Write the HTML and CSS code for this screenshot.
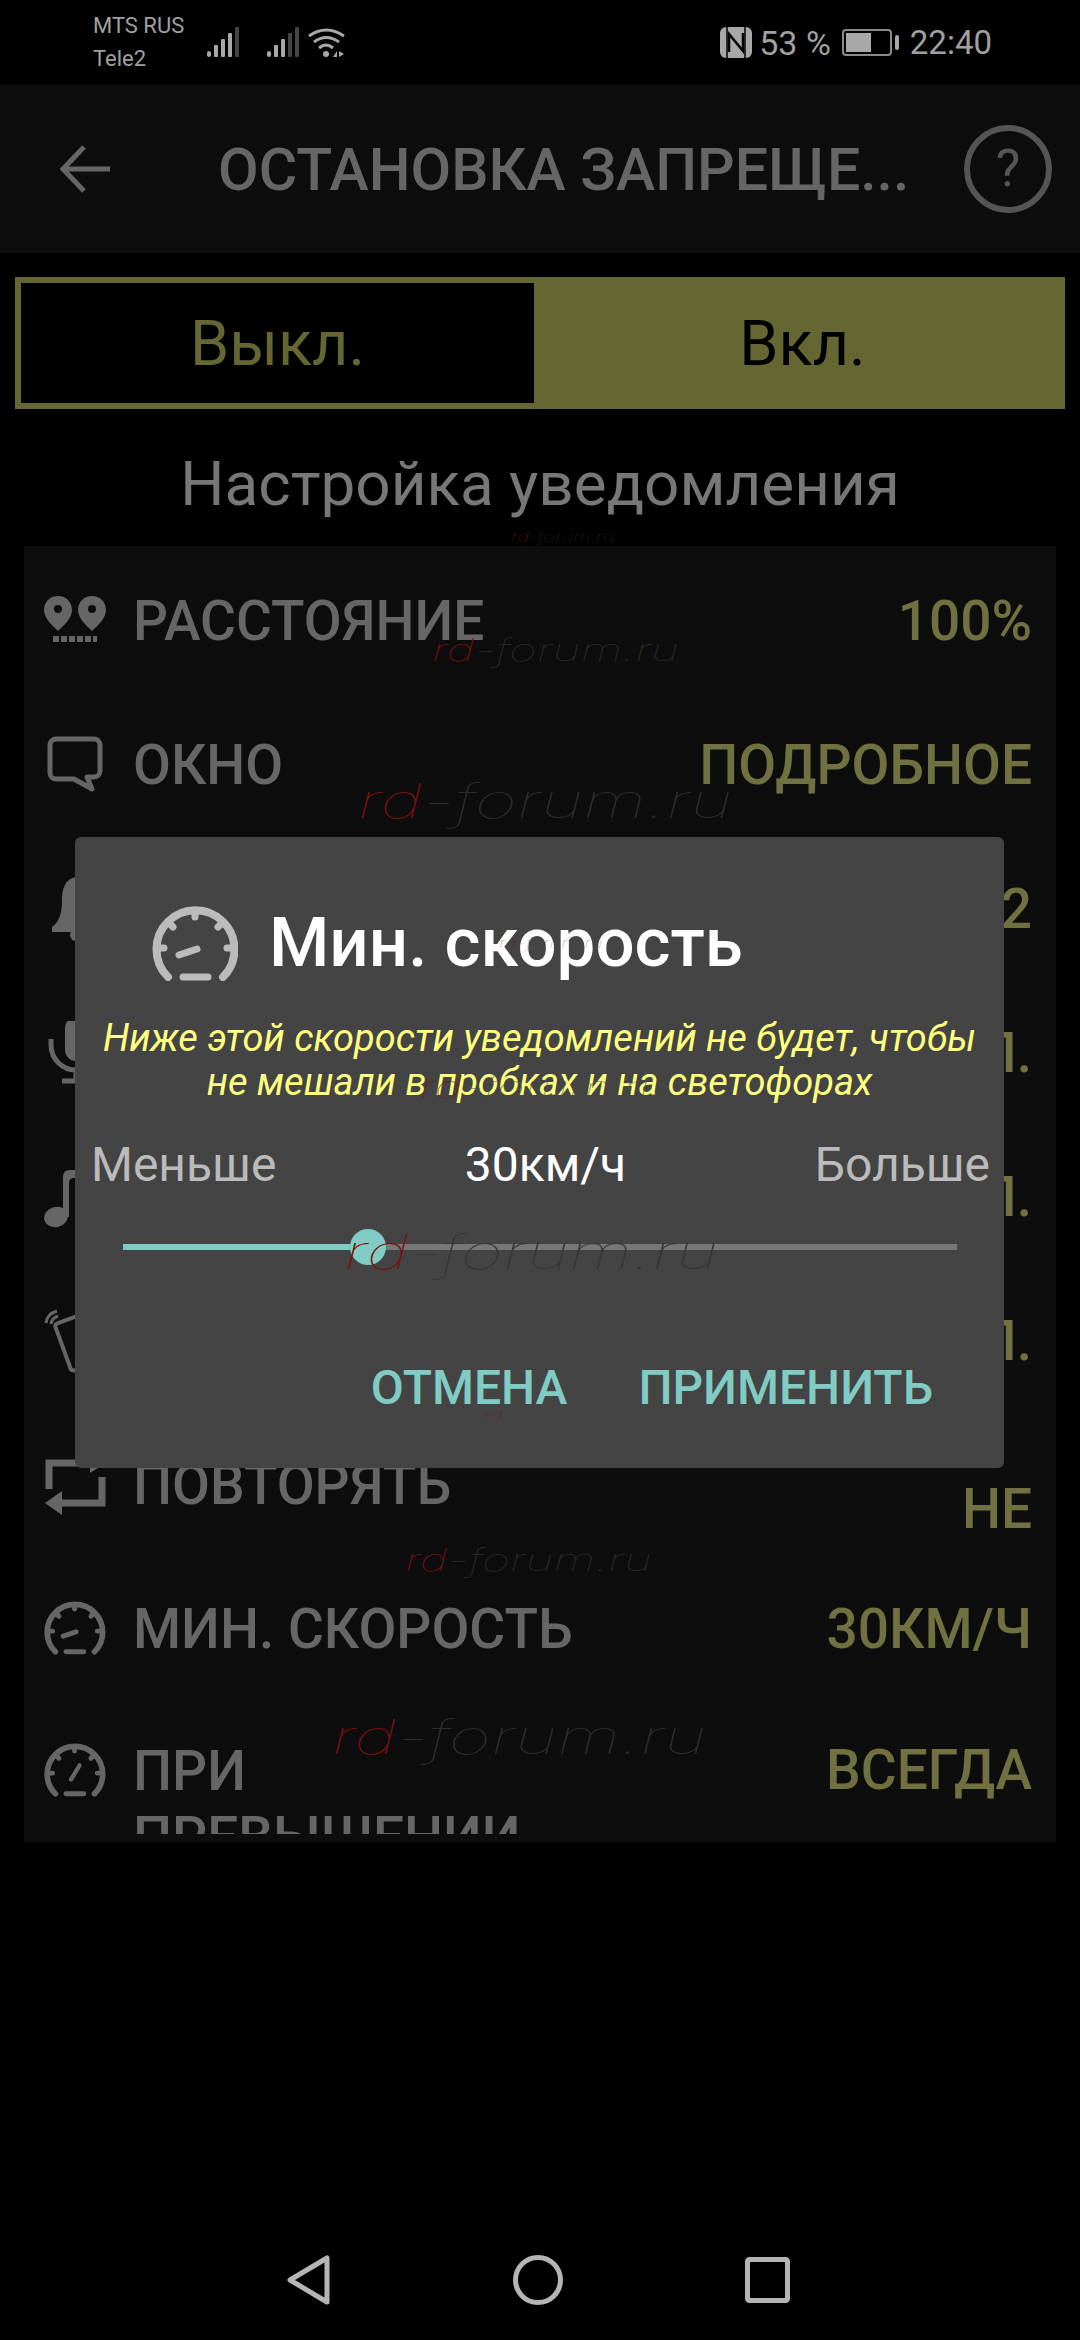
FILE: index.html
```html
<!DOCTYPE html>
<html lang="en">
<head>
  <meta charset="UTF-8">
  <meta name="viewport" content="width=device-width, initial-scale=1.0">
  <title>Мин. скорость</title>
  <link rel="stylesheet" href="styles.css">
</head>
<body>
  <!-- Status bar -->
  <div class="status-bar">
    <div class="carriers">
      <span>MTS RUS</span>
      <span>Tele2</span>
    </div>
    <svg class="signal" width="32" height="30" viewBox="0 0 32 30">
      <rect x="0" y="24" width="4" height="6" rx="2" fill="#a8a8a8"/>
      <rect x="7" y="18" width="4" height="12" rx="1" fill="#a8a8a8"/>
      <rect x="14" y="12" width="4" height="18" rx="1" fill="#a8a8a8"/>
      <rect x="21" y="6" width="4" height="24" rx="1" fill="#a8a8a8"/>
      <rect x="28" y="0" width="4" height="30" rx="1" fill="#444"/>
    </svg>
    <svg class="signal signal-2" width="32" height="30" viewBox="0 0 32 30">
      <rect x="0" y="24" width="4" height="6" rx="2" fill="#a8a8a8"/>
      <rect x="7" y="18" width="4" height="12" rx="1" fill="#a8a8a8"/>
      <rect x="14" y="12" width="4" height="18" rx="1" fill="#a8a8a8"/>
      <rect x="21" y="6" width="4" height="24" rx="1" fill="#444"/>
      <rect x="28" y="0" width="4" height="30" rx="1" fill="#444"/>
    </svg>
    <svg class="wifi" width="38" height="30" viewBox="0 0 38 30" fill="none" stroke="#a8a8a8" stroke-width="3">
      <path d="M1 9 Q18 -3 36 9"/>
      <path d="M6 15 Q18 6 31 15"/>
      <path d="M11 21 Q18 15 25 21"/>
      <circle cx="18" cy="27" r="3" fill="#a8a8a8" stroke="none"/>
      <path d="M25 30 L29 24 V30 Z M31 24 V30 L36 27 Z" fill="#a8a8a8" stroke="none"/>
    </svg>
    <div class="status-right">
      <svg class="nfc" width="32" height="31" viewBox="0 0 32 31">
        <rect width="32" height="31" rx="6" fill="#a8a8a8"/>
        <path d="M7 0 V31 M25 0 V31" stroke="#000" stroke-width="1.5"/>
        <path d="M9 25 V7 L23 24 V6" fill="none" stroke="#000" stroke-width="2.5"/>
      </svg>
      <span class="battery-pct">53 %</span>
      <div class="battery">
        <div class="battery-body"><div class="battery-fill"></div></div>
        <div class="battery-tip"></div>
      </div>
      <span class="clock">22:40</span>
    </div>
  </div>

  <!-- Toolbar -->
  <div class="toolbar">
    <svg class="back" width="50" height="48" viewBox="0 0 50 48" fill="none" stroke="#666" stroke-width="5">
      <path d="M24 2 L3 24 L24 46 M3 24 H50"/>
    </svg>
    <div class="toolbar-title">ОСТАНОВКА ЗАПРЕЩЕ...</div>
    <div class="help">?</div>
  </div>

  <!-- On / off switch -->
  <div class="toggle">
    <div class="toggle-off">Выкл.</div>
    <div class="toggle-on">Вкл.</div>
  </div>

  <div class="section-title">Настройка уведомления</div>

  <!-- Settings list -->
  <div class="list">
    <div class="row">
      <svg class="row-icon" width="64" height="64" viewBox="0 0 64 64">
        <path d="M14 7 C6 7 0 13 0 21 C0 30 10 38 14 42 C18 38 28 30 28 21 C28 13 22 7 14 7 Z" fill="#666"/>
        <path d="M48 7 C40 7 34 13 34 21 C34 30 44 38 48 42 C52 38 62 30 62 21 C62 13 56 7 48 7 Z" fill="#666"/>
        <circle cx="14" cy="20" r="4" fill="#0d0d0d"/>
        <circle cx="48" cy="20" r="4" fill="#0d0d0d"/>
        <path d="M9 50 H53" stroke="#666" stroke-width="6" stroke-dasharray="6 2"/>
      </svg>
      <span class="row-label">РАССТОЯНИЕ</span>
      <span class="row-value">100%</span>
    </div>
    <div class="row">
      <svg class="row-icon" width="64" height="64" viewBox="0 0 64 64" fill="none" stroke="#666" stroke-width="5" stroke-linejoin="round">
        <path d="M12 6 H50 a6 6 0 0 1 6 6 V38 a6 6 0 0 1 -6 6 H43 L48 56 L30 46 H12 a6 6 0 0 1 -6 -6 V12 a6 6 0 0 1 6 -6 Z"/>
      </svg>
      <span class="row-label">ОКНО</span>
      <span class="row-value">ПОДРОБНОЕ</span>
    </div>
    <div class="row">
      <svg class="row-icon" width="64" height="64" viewBox="0 0 64 64">
        <path d="M32 0 C20 2 18 14 18 24 C18 38 14 46 8 50 V55 H56 V50 C50 46 46 38 46 24 C46 14 44 2 32 0 Z" fill="#666"/>
        <circle cx="32" cy="58" r="6" fill="#666"/>
      </svg>
      <span class="row-label">ЗВУК</span>
      <span class="row-value">2</span>
    </div>
    <div class="row">
      <svg class="row-icon" width="64" height="64" viewBox="0 0 64 64" fill="none" stroke="#666" stroke-width="5">
        <rect x="21" y="-4" width="22" height="44" rx="11" fill="#666" stroke="none"/>
        <path d="M7 18 V24 a25 25 0 0 0 50 0 V18 M32 50 V60 M18 60 H46"/>
      </svg>
      <span class="row-label">ГОЛОС</span>
      <span class="row-value">ВКЛ.</span>
    </div>
    <div class="row">
      <svg class="row-icon" width="64" height="64" viewBox="0 0 64 64">
        <ellipse cx="12" cy="52" rx="12" ry="10" fill="#666" transform="rotate(-15 12 52)"/>
        <path d="M19 52 V12 Q19 5 26 5 H44 V13 H30 Q25 13 25 18 V52 Z" fill="#666"/>
      </svg>
      <span class="row-label">МЕЛОДИЯ</span>
      <span class="row-value">ВКЛ.</span>
    </div>
    <div class="row">
      <svg class="row-icon" width="64" height="64" viewBox="0 0 64 64" fill="none" stroke="#666" stroke-width="3">
        <rect x="18" y="8" width="34" height="50" rx="3" stroke-width="4" transform="rotate(-20 35 33)"/>
        <path d="M2 14 Q3 5 13 2 M7 15 Q8 9 14 7"/>
      </svg>
      <span class="row-label">ВИБРАЦИЯ</span>
      <span class="row-value">ВКЛ.</span>
    </div>
    <div class="row">
      <svg class="row-icon" width="64" height="64" viewBox="0 0 64 64" fill="none" stroke="#666" stroke-width="7">
        <path d="M5 36 V10 H40 M58 24 V50 H16"/>
        <path d="M1 50 L18 38 V62 Z M62 10 L46 0 V20 Z" fill="#666" stroke="none"/>
      </svg>
      <span class="row-label">ПОВТОРЯТЬ</span>
      <span class="row-value row-value-low">НЕ</span>
    </div>
    <div class="row">
      <svg class="row-icon" width="64" height="64" viewBox="0 0 90 80" fill="none" stroke="#666" stroke-width="8" stroke-linecap="round">
        <path d="M16 72 A39 39 0 1 1 71 72"/>
        <path d="M43 6 V12 M16 17 L21 22 M71 17 L66 22 M5 43 H12 M82 43 H75" stroke-width="7"/>
        <path d="M27 50 L45 44" stroke-width="7"/>
        <path d="M31 72 H56" stroke-width="7"/>
      </svg>
      <span class="row-label">МИН. СКОРОСТЬ</span>
      <span class="row-value">30КМ/Ч</span>
    </div>
    <div class="row">
      <svg class="row-icon row-icon-top" width="64" height="64" viewBox="0 0 90 80" fill="none" stroke="#666" stroke-width="8" stroke-linecap="round">
        <path d="M16 72 A39 39 0 1 1 71 72"/>
        <path d="M43 6 V12 M16 17 L21 22 M71 17 L66 22 M5 43 H12 M82 43 H75" stroke-width="7"/>
        <path d="M38 52 L50 32" stroke-width="6"/>
        <path d="M31 72 H56" stroke-width="7"/>
      </svg>
      <span class="row-label row-label-clip">ПРИ ПРЕВЫШЕНИИ</span>
      <span class="row-value row-value-top">ВСЕГДА</span>
    </div>
  </div>

  <!-- Navigation bar -->
  <div class="nav-bar">
    <svg width="44" height="50" viewBox="0 0 44 50" fill="none" stroke="#b5b5b5" stroke-width="5" stroke-linejoin="round">
      <path d="M40 3 V47 L3 25 Z"/>
    </svg>
    <svg width="50" height="50" viewBox="0 0 50 50" fill="none" stroke="#b5b5b5" stroke-width="5">
      <circle cx="25" cy="25" r="22.5"/>
    </svg>
    <svg width="45" height="46" viewBox="0 0 45 46" fill="none" stroke="#b5b5b5" stroke-width="5">
      <rect x="2.5" y="2.5" width="40" height="41" rx="2"/>
    </svg>
  </div>

  <!-- Dialog -->
  <div class="dialog">
    <div class="dialog-header">
      <svg width="86" height="76" viewBox="0 0 86 76" fill="none" stroke="#bbb" stroke-width="8" stroke-linecap="round">
        <path d="M16 72 A39 39 0 1 1 71 72"/>
        <path d="M43 6 V12 M16 17 L21 22 M71 17 L66 22 M5 43 H12 M82 43 H75" stroke-width="7"/>
        <path d="M27 50 L45 44" stroke-width="7"/>
        <path d="M31 72 H56" stroke-width="7"/>
      </svg>
      <h1>Мин. скорость</h1>
    </div>
    <p class="dialog-text">Ниже этой скорости уведомлений не будет, чтобы<br>не мешали в пробках и на светофорах</p>
    <div class="speed-labels">
      <span>Меньше</span>
      <span class="speed-current">30км/ч</span>
      <span>Больше</span>
    </div>
    <div class="slider">
      <div class="slider-track">
        <div class="slider-fill" style="width: 29.4%"></div>
      </div>
      <div class="slider-thumb" style="left: 29.4%"></div>
    </div>
    <div class="dialog-actions">
      <span>ОТМЕНА</span>
      <span>ПРИМЕНИТЬ</span>
    </div>
  </div>

  <!-- Watermarks -->
  <div class="wm wm-1"><b>rd</b>-forum.ru</div>
  <div class="wm wm-2"><b>rd</b>-forum.ru</div>
  <div class="wm wm-3"><b>rd</b>-forum.ru</div>
  <div class="wm wm-4 wm-faint"><b>rd</b>-forum.ru</div>
  <div class="wm wm-5 wm-faint"><b>rd</b>-forum.ru</div>
  <div class="wm wm-6 wm-dialog"><b>rd</b>-forum.ru</div>
  <div class="wm wm-7 wm-faint"><b>rd</b>-forum.ru</div>
  <div class="wm wm-8"><b>rd</b>-forum.ru</div>
  <div class="wm wm-9"><b>rd</b>-forum.ru</div>
</body>
</html>
```

FILE: styles.css
```css
/* Global reset */
* {
  margin: 0;
  padding: 0;
  box-sizing: border-box;
}

body {
  font-family: 'Roboto', sans-serif;
  background-color: #000;
  width: 1080px;
  height: 2340px;
  position: relative;
  overflow: hidden;
  display: flex;
  flex-direction: column;
}

/* Status bar */
.status-bar {
  height: 85px;
  display: flex;
  align-items: center;
  padding-left: 93px;
  color: #a0a0a0;
}

.carriers {
  display: flex;
  flex-direction: column;
  width: 114px;
  font-size: 22px;
  line-height: 33px;
  margin-top: -2px;
}

.signal-2 {
  margin-left: 28px;
}

.wifi {
  margin-left: 9px;
}

.signal,
.wifi {
  margin-top: -1px;
}

.status-right {
  margin-left: auto;
  display: flex;
  align-items: center;
  padding-right: 88px;
  font-size: 33px;
}

.battery-pct {
  margin-left: 7px;
  font-size: 34px;
}

.battery {
  margin-left: 11px;
  display: flex;
  align-items: center;
  gap: 3px;
}

.battery-body {
  width: 50px;
  height: 27px;
  border: 2px solid #8a8a8a;
  border-radius: 4px;
  padding: 2px;
}

.battery-fill {
  width: 25px;
  height: 100%;
  background-color: #a8a8a8;
}

.battery-tip {
  width: 4px;
  height: 15px;
  background-color: #a8a8a8;
  border-radius: 2px;
}

.clock {
  margin-left: 11px;
}

/* Toolbar */
.toolbar {
  height: 168px;
  background-color: #0d0d0d;
  display: flex;
  align-items: center;
  padding-left: 60px;
}

.toolbar-title {
  margin-left: 108px;
  width: 696px;
  font-size: 59px;
  font-weight: 500;
  color: #666;
  white-space: nowrap;
}

.help {
  width: 88px;
  height: 88px;
  margin-left: 50px;
  border: 6px solid #555;
  border-radius: 50%;
  color: #555;
  font-size: 52px;
  line-height: 76px;
  text-align: center;
}

/* Toggle */
.toggle {
  margin: 24px 15px 0;
  height: 132px;
  display: flex;
  border: 6px solid #666633;
  background-color: #666633;
  font-size: 63px;
}

.toggle-off,
.toggle-on {
  display: flex;
  align-items: center;
  justify-content: center;
}

.toggle-off {
  width: 513px;
  background-color: #000;
  color: #666633;
}

.toggle-on {
  flex: 1;
  padding-left: 12px;
  color: #000;
}

.section-title {
  height: 137px;
  padding-top: 42px;
  font-size: 62px;
  line-height: 66px;
  text-align: center;
  color: #777;
}

/* Settings list */
.list {
  margin: 0 24px;
  height: 1296px;
  padding-top: 3px;
  background-color: #0d0d0d;
  overflow: hidden;
}

.row {
  height: 144px;
  display: flex;
  align-items: center;
  padding: 0 24px 0 20px;
}

.row-icon {
  flex-shrink: 0;
}

.row-icon-top {
  align-self: flex-start;
  margin-top: 38px;
}

.row-label {
  margin-left: 25px;
  font-size: 55px;
  font-weight: 500;
  line-height: 66px;
  color: #666;
}

.row-label-clip {
  align-self: flex-start;
  margin-top: 37px;
  max-width: 420px;
  height: 96px;
  overflow: hidden;
}

.row-value {
  margin-left: auto;
  font-size: 55px;
  font-weight: 500;
  color: #707040;
}

.row-value-low {
  padding-top: 48px;
}

.row-value-top {
  align-self: flex-start;
  margin-top: 37px;
}

/* Navigation bar */
.nav-bar {
  margin-top: auto;
  height: 133px;
  padding: 13px 0 0 287px;
  display: flex;
  align-items: center;
  gap: 182px;
}

/* Dialog */
.dialog {
  position: absolute;
  left: 75px;
  top: 837px;
  width: 929px;
  height: 631px;
  background-color: #444;
  border-radius: 6px;
  padding-top: 65px;
}

.dialog-header {
  display: flex;
  align-items: center;
  gap: 31px;
  padding-left: 77px;
}

.dialog-header h1 {
  font-size: 69px;
  font-weight: 500;
  color: #fff;
}

.dialog-text {
  margin-top: 33px;
  font-size: 38px;
  line-height: 44px;
  font-style: italic;
  text-align: center;
  color: #ffff80;
}

.speed-labels {
  margin-top: 34px;
  padding: 0 14px 0 16px;
  display: flex;
  justify-content: space-between;
  font-size: 48px;
  line-height: 54px;
  color: #bbb;
}

.speed-current {
  color: #fff;
}

.slider {
  position: relative;
  margin: 37px 47px 0 48px;
  height: 36px;
  display: flex;
  align-items: center;
}

.slider-track {
  width: 100%;
  height: 6px;
  background-color: #777;
}

.slider-fill {
  height: 100%;
  background-color: #80cbc4;
}

.slider-thumb {
  position: absolute;
  top: 0;
  width: 36px;
  height: 36px;
  margin-left: -18px;
  border-radius: 50%;
  background-color: #80cbc4;
}

.dialog-actions {
  margin-top: 95px;
  padding-right: 71px;
  display: flex;
  justify-content: flex-end;
  gap: 71px;
  font-size: 48px;
  font-weight: 500;
  line-height: 56px;
  color: #80cbc4;
}

/* Watermarks */
.wm {
  position: absolute;
  font-family: 'Inter', sans-serif;
  font-weight: 100;
  font-style: italic;
  white-space: nowrap;
  color: #2c2c2c;
  transform: scaleX(1.55);
  transform-origin: left center;
}

.wm b {
  font-weight: 100;
  color: #7a1010;
}

.wm-faint {
  color: #4c4c4c;
  opacity: 0.6;
}

.wm-dialog {
  color: #363636;
}

.wm-1 { left: 511px; top: 529px; font-size: 13px; }
.wm-2 { left: 432px; top: 631px; font-size: 31px; }
.wm-3 { left: 358px; top: 772px; font-size: 47px; }
.wm-4 { left: 499px; top: 935px; font-size: 13px; }
.wm-5 { left: 420px; top: 1068px; font-size: 31px; }
.wm-6 { left: 344px; top: 1223px; font-size: 47px; }
.wm-7 { left: 485px; top: 1407px; font-size: 13px; }
.wm-8 { left: 405px; top: 1541px; font-size: 31px; }
.wm-9 { left: 332px; top: 1708px; font-size: 47px; }
```
